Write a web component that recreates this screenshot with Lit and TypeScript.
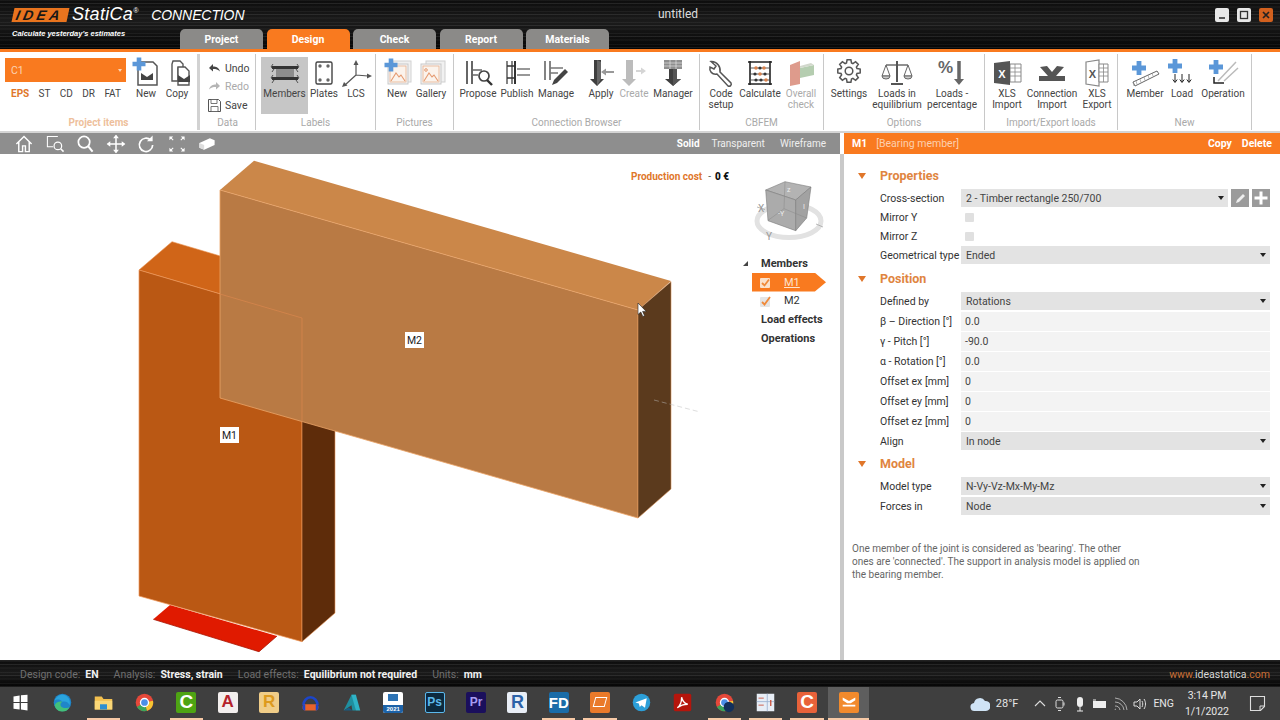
import { LitElement, html, css, svg } from 'lit';
import { customElement } from 'lit/decorators.js';

const BLUE = '#5b97d8';

const plus = (x: number, y: number, s = 6, t = 2.2) => svg`<path d="M${x - t} ${y - s}h${t * 2}v${s - t}h${s - t}v${t * 2}h${t - s}v${s - t}h${-t * 2}v${t - s}h${t - s}v${-t * 2}h${s - t}z" fill="${BLUE}"/>`;
const chev = (x: number, y: number, c = '#444') => svg`<path d="M${x} ${y}l6 4 6-4v7h-12z" fill="${c}"/>`;
const pic = (x: number, y: number) => svg`
  <rect x="${x}" y="${y}" width="20" height="20" fill="#f4f4f4" stroke="#c9c9c9"/>
  <rect x="${x + 2}" y="${y + 2}" width="16" height="16" fill="#fbf3ec" stroke="#e9b18f" stroke-width=".8"/>
  <path d="M${x + 3} ${y + 17}l5-8 3 4 2-2 4 6" fill="none" stroke="#e59a70" stroke-width="1.1"/>`;

const gear = () => {
  let d = '';
  const n = 8;
  for (let i = 0; i < n; i++) {
    const a = (i / n) * Math.PI * 2;
    const pts = [[-0.3, 8.4], [-0.17, 11.4], [0.17, 11.4], [0.3, 8.4]];
    pts.forEach(([da, r]) => {
      const x = 17 + Math.cos(a + da) * r;
      const y = 13 + Math.sin(a + da) * r;
      d += `${d ? 'L' : 'M'}${x.toFixed(1)} ${y.toFixed(1)}`;
    });
  }
  return svg`<path d="${d}z" fill="none" stroke="#555" stroke-width="1.5"/><circle cx="17" cy="13" r="3.8" fill="none" stroke="#555" stroke-width="1.5"/>`;
};

const arrowDown = (x: number, y: number, c = '#222') => svg`<path d="M${x} ${y}v8M${x - 2.2} ${y + 5.5}l2.2 3 2.2-3" fill="none" stroke="${c}" stroke-width="1"/>`;

const icons: Record<string, unknown> = {
  new: svg`<path d="M9 4h15l4 4v19H9z" fill="#fff" stroke="#555" stroke-width="1.5"/>${chev(12, 15)}${plus(10, 6, 6.5, 2.3)}`,
  copy: svg`<path d="M13 3h7l3 3v4h-5v13h-6V6z" fill="#fff" stroke="#555" stroke-width="1.4"/><path d="M18 9h7l4 4v14H18z" fill="#fff" stroke="#555" stroke-width="1.4"/>${chev(18, 17)}`,
  members: svg`<path d="M8 10h18v10H8z" fill="#8d8d8d"/><path d="M4 8h26v3H4zM4 19h26v3H4z" fill="#333"/><path d="M5 6l-2 3 3 2-2 3M29 6l2 3-3 2 2 3M5 17l-2 3 3 2-2 3M29 17l2 3-3 2 2 3" fill="none" stroke="#333" stroke-width=".8"/>`,
  plates: svg`<rect x="9" y="4" width="16" height="22" rx="1.5" fill="#fff" stroke="#444" stroke-width="1.4"/><g fill="#666"><circle cx="13" cy="8" r="1.7"/><circle cx="21" cy="8" r="1.7"/><circle cx="13" cy="22" r="1.7"/><circle cx="21" cy="22" r="1.7"/></g>`,
  lcs: svg`<path d="M17 17V5M17 17l12 1M17 17L6 27" stroke="#555" stroke-width="1.2" fill="none"/><path d="M17 2l-2.5 5h5zM33 18l-5-2.5v5zM3 29l5.5-1.5-3.5-3.5z" fill="#555"/>`,
  picnew: svg`<rect x="13" y="3" width="18" height="21" fill="#f1f1f1" stroke="#d2d2d2"/>${pic(8, 6)}${plus(11, 7, 6.5, 2.3)}`,
  gallery: svg`<rect x="12" y="3" width="19" height="21" fill="#f1f1f1" stroke="#cfcfcf"/>${pic(7, 6)}<circle cx="12" cy="12" r="1.3" fill="none" stroke="#e59a70"/>`,
  propose: svg`<path d="M6 3v23M11 3v23" stroke="#666" stroke-width="2"/><path d="M11 12h10M11 17h6" stroke="#666" stroke-width="1.5"/><circle cx="23" cy="18" r="5" fill="#fff" stroke="#444" stroke-width="1.7"/><path d="M26 22l5 5" stroke="#333" stroke-width="2.4"/>`,
  publish: svg`<path d="M7 3v23M12 3v23" stroke="#666" stroke-width="1.6"/><path d="M15 3v23" stroke="#333" stroke-width="2"/><path d="M7 8h8M7 20h8" stroke="#333" stroke-width="1.4"/><path d="M17 11h13M17 17h13" stroke="#777" stroke-width="1.7"/>`,
  manage: svg`<path d="M6 3v19M11 3v19" stroke="#777" stroke-width="1.8"/><path d="M11 10h13M11 15h8" stroke="#777" stroke-width="1.6"/><path d="M13 27l2-5 11-11 3 3-11 11z" fill="#444"/>`,
  apply: svg`<path d="M10 2h7v19h3l-7 7-7-7h4z" fill="#3f3f3f"/><path d="M17 4v17l-4 7V2z" fill="#666"/><path d="M17 14l5-3.500v2.500h8v2h-8v2.500z" fill="#999"/>`,
  create: svg`<path d="M9 2h7v19h3l-7 7-7-7h4z" fill="#bcbcbc"/><path d="M19 12h5v-2.500l5 3.500-5 3.500v-2.500h-5z" fill="#d5d5d5"/>`,
  manager: svg`<path d="M8 2h18v9H8z" fill="#8f8f8f"/><path d="M8 5h18M8 8h18M14 2v9M20 2v9" stroke="#eee" stroke-width=".6"/><path d="M13 11h8v10h4l-8 7-8-7h4z" fill="#3f3f3f"/><path d="M17 11h4v10h4l-8 7z" fill="#555"/>`,
  wrench: svg`<path d="M7 3.500l5 4.500-2 3-4-2c-1 4 2 8 7 7l11 12c2 1 4-1 3-3L16 14c1-5-3-11-9-10.500z" fill="#fff" stroke="#555" stroke-width="1.5"/>`,
  abacus: svg`<path d="M7 3v24M27 3v24M5 4h24M5 26h24" stroke="#222" stroke-width="1.6"/><path d="M7 10h20M7 16h20M7 22h20" stroke="#444" stroke-width=".9"/><g fill="#d9824d"><circle cx="13" cy="10" r="1.8"/><circle cx="21" cy="10" r="1.8"/><circle cx="17" cy="16" r="1.8"/><circle cx="23" cy="22" r="1.8"/></g><g fill="#333"><circle cx="17" cy="10" r="1.6"/><circle cx="12" cy="16" r="1.6"/><circle cx="22" cy="16" r="1.6"/><circle cx="13" cy="22" r="1.6"/><circle cx="18" cy="22" r="1.6"/></g>`,
  overall: svg`<path d="M6 7l10-4v23l-10 2z" fill="#de9b8c"/><path d="M16 10l14-3v10l-14 3z" fill="#b5cdb0"/><path d="M16 10l14-3-3-2-11 3z" fill="#d2d8cc"/>`,
  settings: gear(),
  scale: svg`<path d="M17 3v21" stroke="#555" stroke-width="2"/><path d="M11 25h12v2H11z" fill="#555"/><path d="M6 7h22" stroke="#555" stroke-width="1.3"/><path d="M6 7l-4 11h8zM28 7l-4 11h8z" fill="none" stroke="#666"/><path d="M2 18a4 3 0 0 0 8 0zM24 18a4 3 0 0 0 8 0z" fill="#ccc" stroke="#666"/>`,
  percent: svg`<text class="pct" x="3" y="15">%</text><path d="M24 3v19" stroke="#666" stroke-width="3.500"/><path d="M19 21h10l-5 6z" fill="#666"/>`,
  xlsin: svg`<path d="M20 6h11v18H20z" fill="#fff" stroke="#888"/><path d="M20 10h11M20 14h11M20 18h11M25 6v18" stroke="#888" stroke-width=".8"/><path d="M4 5l16-2v24l-16-2z" fill="#555"/><text class="xl" x="12" y="20" text-anchor="middle">X</text>`,
  conn: svg`<path d="M5 9l7-1 5 6 5-6 7 1-8 9h9v5H4v-5h9z" fill="#555"/>`,
  xlsout: svg`<path d="M6 4l13-2v26l-13-2z" fill="#fff" stroke="#888" stroke-width="1.2"/><path d="M19 6h9v18h-9z" fill="#fff" stroke="#888"/><path d="M19 10h9M19 14h9M19 18h9M23.500 6v18" stroke="#888" stroke-width=".8"/><text class="xl dark" x="12.500" y="20" text-anchor="middle">X</text>`,
  member: svg`<path d="M5 24l24-11 2 3-24 12z" fill="#fff" stroke="#666" stroke-width="1"/><path d="M5 24l1 4M8 22.500l1 4M12 21l1 3.500M16 19l1 3.500M20 17l1 3.500M24 15l1 3" stroke="#888" stroke-width=".6"/>${plus(11, 10, 7, 2.4)}`,
  load: svg`${plus(10, 8, 7, 2.4)}${arrowDown(10, 16)}${arrowDown(17, 16)}${arrowDown(24, 16)}`,
  operation: svg`<path d="M12 23L30 4M18 23L32 10" stroke="#bbb" stroke-width="1.5"/><path d="M8 19v6h10" fill="none" stroke="#222" stroke-width="1.5"/>${plus(10, 9, 7, 2.4)}`,
};

type Item = { l: string; i: string; w: number; off?: boolean; on?: boolean; ml?: number };
type Group = { label: string; w: number; pl: number; items: Item[] };

const groups: Group[] = [
  { label: 'Labels', w: 120, pl: 5, items: [
    { l: 'Members', i: 'members', w: 47, on: true },
    { l: 'Plates', i: 'plates', w: 32 },
    { l: 'LCS', i: 'lcs', w: 32 },
  ] },
  { label: 'Pictures', w: 78, pl: 4, items: [
    { l: 'New', i: 'picnew', w: 34 },
    { l: 'Gallery', i: 'gallery', w: 34 },
  ] },
  { label: 'Connection Browser', w: 246, pl: 4, items: [
    { l: 'Propose', i: 'propose', w: 40 },
    { l: 'Publish', i: 'publish', w: 38 },
    { l: 'Manage', i: 'manage', w: 40 },
    { l: 'Apply', i: 'apply', w: 34, ml: 8 },
    { l: 'Create', i: 'create', w: 32, off: true },
    { l: 'Manager', i: 'manager', w: 46 },
  ] },
  { label: 'CBFEM', w: 124, pl: 4, items: [
    { l: 'Code\nsetup', i: 'wrench', w: 34 },
    { l: 'Calculate', i: 'abacus', w: 44 },
    { l: 'Overall\ncheck', i: 'overall', w: 38, off: true },
  ] },
  { label: 'Options', w: 161, pl: 4, items: [
    { l: 'Settings', i: 'settings', w: 42 },
    { l: 'Loads in\nequilibrium', i: 'scale', w: 54 },
    { l: 'Loads -\npercentage', i: 'percent', w: 56 },
  ] },
  { label: 'Import/Export loads', w: 133, pl: 4, items: [
    { l: 'XLS\nImport', i: 'xlsin', w: 36 },
    { l: 'Connection\nImport', i: 'conn', w: 54 },
    { l: 'XLS\nExport', i: 'xlsout', w: 36 },
  ] },
  { label: 'New', w: 134, pl: 6, items: [
    { l: 'Member', i: 'member', w: 42 },
    { l: 'Load', i: 'load', w: 32 },
    { l: 'Operation', i: 'operation', w: 50 },
  ] },
];

const tools = [
  svg`<path d="M2 10l8-8 8 8M4.500 8V18h4v-6h3v6h4V8" fill="none" stroke="#fff" stroke-width="1.500"/>`,
  svg`<path d="M13 2H2v11h6" fill="none" stroke="#fff" stroke-width="1.1"/><circle cx="13" cy="12" r="4" fill="none" stroke="#fff" stroke-width="1.3"/><path d="M16 15l3 3" stroke="#fff" stroke-width="1.6"/>`,
  svg`<circle cx="9" cy="8" r="6" fill="none" stroke="#fff" stroke-width="1.800"/><path d="M13 12l5 6" stroke="#fff" stroke-width="2.200"/>`,
  svg`<path d="M10 2v16M2 10h16" stroke="#fff" stroke-width="1.6"/><path d="M10 0l3 4H7zM10 20l3-4H7zM0 10l4-3v6zM20 10l-4-3v6z" fill="#fff"/>`,
  svg`<path d="M15 6a7 7 0 1 0 2 5" fill="none" stroke="#fff" stroke-width="1.8"/><path d="M17 1v6h-6z" fill="#fff"/>`,
  svg`<g fill="none" stroke="#fff" stroke-width="1.100"><path d="M6 6L3 3M14 6l3-3M6 14l-3 3M14 14l3 3"/></g><path d="M2 2h4L2 6zM18 2v4l-4-4zM2 18v-4l4 4zM18 18h-4l4-4z" fill="#fff"/>`,
  svg`<path d="M2 9l11-5 5 2v5L7 16l-5-2z" fill="#fff"/><path d="M2 9l5 2v5l-5-2z" fill="#ddd"/>`,
];

const appIco = (body: unknown) => html`<svg class="app-ico" viewBox="0 0 24 24">${body}</svg>`;
const badge = (cls: string, t: string) => html`<span class="badge ${cls}">${t}</span>`;
const chrome = svg`<circle cx="12" cy="12" r="10" fill="#e5483a"/><path d="M12 12L3.300 17A10 10 0 0 0 15 21.500z" fill="#3ba55c"/><path d="M12 12l3 9.500A10 10 0 0 0 21.800 10z" fill="#f6c531"/><circle cx="12" cy="12" r="4.600" fill="#4a8fe7" stroke="#fff" stroke-width="1.500"/>`;

const apps: { b: unknown; run?: boolean; active?: boolean }[] = [
  { b: appIco(svg`<path d="M4 5l7-1v7.500H4zM12.500 3.800L20 3v8.500h-7.500zM4 12.500h7V20l-7-1zM12.500 12.500H20V21l-7.500-1z" fill="#fff"/>`) },
  { b: appIco(svg`<circle cx="12" cy="12" r="10" fill="#1f86c9"/><path d="M3 15a9 9 0 0 0 17 2c-3 2-8 2-10-1-1-2 0-4 2-5-4-1-8 1-9 4z" fill="#43c07a"/><path d="M12 11c4-1 7 1 8 4 2-5-2-12-8-12-4 0-8 3-9 7 2-2 6-2 9 1z" fill="#2aa4dd"/>`) },
  { b: appIco(svg`<path d="M2 5h8l2 3h10v12H2z" fill="#f3c04f"/><path d="M2 10h20v10H2z" fill="#fad777"/><path d="M8 14h8v6H8z" fill="#2f8fd0"/>`), run: true },
  { b: appIco(chrome) },
  { b: badge('c-green', 'C'), run: true },
  { b: badge('acad', 'A') },
  { b: badge('rev', 'R') },
  { b: appIco(svg`<path d="M4 15a8 9 0 0 1 16 0" fill="none" stroke="#1c45c9" stroke-width="3"/><rect x="3" y="14" width="18" height="7" rx="3" fill="#e8622a"/><path d="M3 17a3 3 0 0 1 3-3v7a3 3 0 0 1-3-3zM21 17a3 3 0 0 0-3-3v7a3 3 0 0 0 3-3z" fill="#1c45c9"/>`) },
  { b: appIco(svg`<path d="M3 21L12 3h5v18h-4l-1-6z" fill="#1f8f9f"/><path d="M12 3h5l5 18h-5z" fill="#2fb3c7"/><path d="M3 21l6-3 4 3z" fill="#175e88"/>`) },
  { b: html`<span class="badge d2021"><i></i><b>2021</b></span>` },
  { b: badge('ps', 'Ps') },
  { b: badge('pr', 'Pr') },
  { b: badge('rvt', 'R') },
  { b: badge('fd', 'FD'), run: true },
  { b: html`<span class="badge idea-app"><i></i></span>`, run: true },
  { b: appIco(svg`<circle cx="12" cy="12" r="10" fill="#2c9fd9"/><path d="M5 12l13-5-2 11-4-3-2 2-1-4z" fill="#fff"/>`) },
  { b: appIco(svg`<rect x="2" y="2" width="20" height="20" rx="2" fill="#b5150c"/><path d="M6 18c3-2 5-7 5-12 1 5 3 7 7 8-4 0-8 1-12 4z" fill="none" stroke="#fff" stroke-width="1.500"/>`) },
  { b: appIco(svg`${chrome}<circle cx="17" cy="17" r="6" fill="#12305c"/>`), run: true },
  { b: appIco(svg`<rect x="2" y="2" width="20" height="20" fill="#e8eef6"/><path d="M14 2v20M2 11h20" stroke="#9db4d2"/><path d="M4 7h6M4 15h6" stroke="#c9503a"/><path d="M18 9v7" stroke="#c9503a" stroke-width="1.500"/>`), run: true },
  { b: badge('c-orange', 'C'), run: true },
  { b: html`<span class="badge conn-app"><svg viewBox="0 0 20 20"><path d="M3 5l7 4 7-4v3l-5 3.500H8L3 8zM3 13h14v2H3z" fill="#fff"/></svg></span>`, run: true, active: true },
];

@customElement('app-root')
export class AppRoot extends LitElement {
  static styles = css`
    :host {
      display: block;
      width: 1280px;
      height: 720px;
      overflow: hidden;
      font-family: Roboto, "Open Sans", sans-serif;
      font-size: 10.5px;
      background: #fff;
      color: #333;
    }
    .streak {
      background:
        repeating-linear-gradient(180deg, rgba(255,255,255,.05) 0 1px, transparent 1px 3px, rgba(255,255,255,.09) 3px 4px, transparent 4px 6px, rgba(255,255,255,.03) 6px 8px, transparent 8px 11px),
        linear-gradient(180deg, #0d0d0d, #1b1b1b 45%, #050505);
    }

    /* title bar */
    .title {
      height: 52px;
      box-sizing: border-box;
      display: flex;
      border-bottom: 3px solid #f97a1f;
    }
    .brand {
      width: 180px;
      box-sizing: border-box;
      flex: none;
      padding: 6px 0 0 13px;
      font-family: "Liberation Sans", sans-serif;
      font-style: italic;
      color: #fff;
    }
    .logo-line { display: flex; align-items: center; height: 17px; white-space: nowrap; }
    .idea {
      background: #e9741e;
      color: #171717;
      font-weight: 700;
      font-size: 14px;
      line-height: 14px;
      padding-left: 3px;
      width: 55px;
      letter-spacing: 3.4px;
      box-sizing: border-box;
      transform: skewX(-12deg);
      flex: none;
    }
    .stat { font-size: 18px; margin-left: 4px; letter-spacing: .3px; }
    .reg { font-size: 7px; align-self: flex-start; margin-top: 1px; }
    .prod { font-size: 14px; margin-left: 13px; letter-spacing: -.1px; }
    .slogan { font-size: 7.500px; font-weight: 700; margin-top: 6px; margin-left: -1px; white-space: nowrap; }
    .tabs { display: flex; align-items: flex-end; gap: 3.500px; }
    .tab {
      width: 83px;
      height: 20px;
      background: #8b8a88;
      border-radius: 5px 5px 0 0;
      color: #fff;
      font-weight: 700;
      font-size: 10.500px;
      display: flex;
      align-items: center;
      justify-content: center;
    }
    .tab.on { background: #f97a1f; }
    .doc {
      flex: 1;
      text-align: center;
      color: #ddd;
      font-size: 12px;
      padding-top: 7px;
      padding-right: 468px;
    }
    .win { display: flex; gap: 8px; padding: 8px 7px 0 0; }
    .win span {
      width: 14px;
      height: 14px;
      border-radius: 2px;
      background: #e8e8e8;
      display: flex;
      align-items: center;
      justify-content: center;
    }
    .win span.x { background: #d2601e; }
    .win svg { width: 14px; height: 14px; }

    /* ribbon */
    .ribbon {
      height: 81px;
      box-sizing: border-box;
      border-bottom: 2px solid #d4d4d4;
      padding-top: 2px;
      display: flex;
      background: #fff;
    }
    .grp {
      height: 76px;
      box-sizing: border-box;
      border-right: 1px solid #c8c8c8;
      display: flex;
      flex-direction: column;
      flex: none;
      padding-top: 3px;
    }
    .grp.first { border-right: 3px solid #d2d2d2; width: 200px; }
    .grp.data { width: 56px; }
    .grp-body { display: flex; height: 57px; flex: none; }
    .grp-label {
      text-align: center;
      color: #a9a9a9;
      font-size: 10px;
      line-height: 14px;
      margin-top: 2px;
    }
    .first .grp-label { color: #eebf9c; font-weight: 700; }
    .btn {
      display: flex;
      flex-direction: column;
      align-items: center;
      flex: none;
      height: 57px;
      color: #444;
      font-size: 10px;
      line-height: 11px;
      text-align: center;
    }
    .btn.on { background: #c6c6c6; }
    .btn.off { color: #aaa; }
    .btn svg { width: 34px; height: 30px; margin-top: 1px; overflow: visible; flex: none; }
    .btn span { white-space: pre; }
    .pct { font: 700 17px "Liberation Sans", sans-serif; fill: #666; }
    .xl { font: 700 11px "Liberation Sans", sans-serif; fill: #fff; }
    .xl.dark { fill: #555; }
    .items { width: 121px; margin: 1px 2px 0 5px; flex: none; }
    .combo {
      height: 24px;
      background: #f97a1f;
      color: #fbd3b4;
      display: flex;
      align-items: center;
      justify-content: space-between;
      padding: 0 4px 0 6px;
      font-size: 10.500px;
    }
    .tri { width: 0; height: 0; border-left: 2px solid transparent; border-right: 2px solid transparent; border-top: 3px solid #fbd3b4; }
    .codes { display: flex; justify-content: space-between; padding: 5px 5px 0 6px; font-size: 10px; color: #444; line-height: 14px; }
    .codes b { color: #e0762a; }
    .stack { padding: 2px 0 0 8px; }
    .mini { display: flex; align-items: center; gap: 4px; height: 18.500px; font-size: 10.500px; color: #444; }
    .mini.off { color: #aaa; }
    .mini svg { width: 13px; height: 13px; flex: none; }

    /* work area */
    .work { display: grid; grid-template-columns: 840px 4px 436px; grid-template-rows: 21px 506px; }
    .bar {
      background: #8e8e8e;
      display: flex;
      align-items: center;
      padding-left: 14px;
      color: #eee;
      font-size: 10px;
    }
    .bar svg { width: 20px; height: 20px; margin-right: 10.500px; flex: none; transform: scale(.95); }
    .modes { margin-left: auto; display: flex; gap: 15px; padding-right: 14px; }
    .modes b { color: #fff; margin-right: -3px; }
    .gap { background: #fff; }
    .divider { background: #c9c9c9; }
    .head {
      background: #f97a1f;
      color: #fff;
      display: flex;
      align-items: center;
      padding: 0 8px 0 8px;
      font-weight: 700;
    }
    .head em { font-style: normal; font-weight: 400; color: #fcd0ae; margin-left: 9px; }
    .head .act { margin-left: auto; display: flex; gap: 10px; }
    .view { position: relative; background: #fff; overflow: hidden; }
    .scene { position: absolute; inset: 0; width: 840px; height: 506px; }
    .mlabel { font: 10.500px Roboto, sans-serif; fill: #222; }
    .cost { position: absolute; left: 631px; top: 17px; font-size: 10px; font-weight: 700; color: #e0762a; white-space: nowrap; }
    .cost i { font-style: normal; font-weight: 400; color: #555; margin: 0 4px 0 6px; }
    .cost b { color: #111; }
    .cube { position: absolute; left: 750px; top: 22px; width: 80px; height: 70px; }
    .cube text { font: 7px Roboto, sans-serif; fill: #eee; }
    .cube text.ax { fill: #999; font-size: 10px; }
    .tree { position: absolute; left: 742px; top: 100px; width: 86px; font-size: 11px; }
    .t-row { height: 18.800px; display: flex; align-items: center; padding-left: 19px; font-weight: 700; color: #333; white-space: nowrap; position: relative; }
    .t-row .open { position: absolute; left: 1px; top: 7px; width: 0; height: 0; border-left: 5px solid transparent; border-bottom: 5px solid #444; }
    .t-row.leaf { font-weight: 400; padding-left: 42px; }
    .t-row.leaf svg { position: absolute; left: 17px; top: 3px; width: 13px; height: 13px; }
    .t-row.sel { background: #f97a1f; color: #fde3cf; text-decoration: underline; margin-left: 10px; padding-left: 32px; clip-path: polygon(0 0, 85% 0, 100% 50%, 85% 100%, 0 100%); width: 74px; box-sizing: border-box; }
    .t-row.sel svg { left: 7px; }

    /* properties */
    .panel { background: #fff; padding: 12px 10px 0 14px; color: #333; }
    .sec-h { display: flex; align-items: center; height: 19px; color: #e0853f; font-weight: 700; font-size: 12.500px; gap: 14px; }
    .sec-h i { width: 0; height: 0; border-left: 4px solid transparent; border-right: 4px solid transparent; border-top: 6px solid #e0762a; }
    .rows { display: flex; flex-direction: column; gap: 1px; margin: 4px 0 3px; }
    .rows.tight { gap: 0; margin: 4px 0 4px; }
    .rows.last { margin-top: 4px; }
    .row { display: grid; grid-template-columns: 81px 1fr; padding-left: 22px; height: 19px; align-items: stretch; }
    .row label { display: flex; align-items: center; white-space: nowrap; }
    .sel-box { background: #e3e3e3; display: flex; align-items: center; justify-content: space-between; padding: 0 4px 0 5px; color: #444; margin-bottom: 1px; }
    .sel-box i { width: 0; height: 0; border-left: 3px solid transparent; border-right: 3px solid transparent; border-top: 4px solid #222; }
    .inp { background: #f3f3f3; display: flex; align-items: center; padding-left: 4px; color: #444; }
    .chk { display: flex; align-items: center; padding-left: 4px; }
    .chk i { width: 9px; height: 9px; background: #e0e0e0; border-radius: 1px; }
    .cs { display: flex; gap: 3px; }
    .cs .sel-box { flex: 1; }
    .sq { width: 18px; background: #9b9b9b; margin-bottom: 1px; flex: none; display: flex; }
    .sq svg { width: 18px; height: 18px; }
    .note { margin: 26px 0 0 -6px; line-height: 13px; color: #666; font-size: 10px; }

    /* status and taskbar */
    .status {
      height: 27px;
      display: flex;
      align-items: center;
      padding: 0 10px 0 20px;
      box-sizing: border-box;
      color: #6f6f6f;
      white-space: nowrap;
      border-top: 1px solid #222;
    }
    .status b { color: #f2f2f2; margin: 0 15px 0 5px; }
    .web { margin-left: auto; color: #c96f35; }
    .web span { color: #d8d8d8; }
    .task { height: 33px; background: #3f3f3f; display: flex; align-items: stretch; color: #e6e6e6; }
    .app { width: 41.400px; flex: none; display: flex; align-items: center; justify-content: center; position: relative; box-sizing: border-box; padding-bottom: 3px; }
    .app.run::after { content: ''; position: absolute; left: 4px; right: 4px; bottom: 0; height: 2px; background: #f7c9a6; }
    .app.active { background: #5e5e5e; }
    .app.active::after { left: 0; right: 0; }
    .app-ico { width: 21px; height: 21px; }
    .badge {
      width: 20px;
      height: 21px;
      display: flex;
      align-items: center;
      justify-content: center;
      font: 700 13px "Liberation Sans", sans-serif;
      border-radius: 2px;
    }
    .c-green { background: #4ea413; color: #fff; font-size: 19px; }
    .c-orange { background: #e8623a; color: #fff; font-size: 19px; }
    .acad { background: #f3efee; color: #b5232c; font-size: 17px; }
    .rev { background: #f0cd88; color: #dd9a1e; font-size: 17px; }
    .d2021 { background: #fff; flex-direction: column; justify-content: space-between; overflow: hidden; }
    .d2021 i { width: 10px; height: 7px; background: #2e74b5; margin-top: 2px; }
    .d2021 b { background: #1d63a8; color: #fff; width: 100%; text-align: center; font-size: 6px; line-height: 8px; }
    .ps { background: #0d2a3f; color: #5bb8ec; border: 1px solid #5bb8ec; box-sizing: border-box; font-size: 12px; }
    .pr { background: #1a0f5c; color: #a79cf2; font-size: 12px; }
    .rvt { background: #e9eef6; color: #2c62a8; font-size: 18px; }
    .fd { background: #1a6ca8; color: #fff; font-size: 15px; }
    .idea-app { background: #ea7a2a; }
    .idea-app i { width: 10px; height: 8px; border: 1.500px solid #fff; transform: skewX(-15deg); }
    .conn-app { background: #f28a2c; }
    .conn-app svg { width: 18px; height: 18px; }
    .tray { margin-left: auto; display: flex; align-items: center; font-size: 11px; }
    .tray svg { flex: none; }
    .temp { margin: 0 14px 0 6px; }
    .ico16 { width: 16px; height: 16px; margin-right: 4px; }
    .cloud { width: 20px; height: 16px; }
    .eng { font-size: 10.500px; margin: 0 9px 0 1px; }
    .clock { text-align: center; line-height: 16px; font-size: 10.500px; width: 48px; }
    .notif { width: 17px; height: 17px; margin: 0 14px 0 18px; }
  `;

  private ribbonGroup(g: Group) {
    return html`
      <div class="grp" style="width:${g.w}px">
        <div class="grp-body" style="padding-left:${g.pl}px">
          ${g.items.map((it) => html`
            <div class="btn ${it.on ? 'on' : ''} ${it.off ? 'off' : ''}" style="width:${it.w}px;margin-left:${it.ml ?? 0}px">
              <svg viewBox="0 0 34 30">${icons[it.i]}</svg>
              <span>${it.l}</span>
            </div>`)}
        </div>
        <div class="grp-label">${g.label}</div>
      </div>`;
  }

  private viewport() {
    return html`
      <svg class="scene" viewBox="0 154 840 506">
        <path d="M153.300 619.300L170 605l107 31-18 15.700z" fill="#e01a00"/>
        <path d="M153.300 619.300L259 651.700l18-15.700" fill="none" stroke="#a81400" stroke-width=".8"/>
        <path d="M139 270l33-28.300L335 290l-33 28z" fill="#d06518" stroke="#e8914f" stroke-width=".6"/>
        <path d="M139 270l163 48v323.700L139 596z" fill="#ba5814" stroke="#ef9a5c" stroke-width=".7"/>
        <path d="M302 318l33-28v323l-33 28.700z" fill="#5e2c0a" stroke="#ef9a5c" stroke-width=".6"/>
        <path d="M220 190l34-29.300L671 281l-33 29z" fill="#cb8749"/>
        <path d="M220 190l418 120v208L220 398z" fill="#b97a44" stroke="#eba468" stroke-width=".8"/>
        <path d="M638 310l33-28.300V489l-33 29z" fill="#5b3a1d" stroke="#d79058" stroke-width=".6"/>
        <path d="M220 294l82 24v104" fill="none" stroke="#d5854c" stroke-width=".8"/>
        <path d="M654 400l46 12" stroke="#bdbdbd" stroke-width=".7" stroke-dasharray="5 3" opacity=".7"/>
        <rect x="220" y="427" width="19" height="16" fill="#fff"/>
        <text class="mlabel" x="229.500" y="439" text-anchor="middle">M1</text>
        <rect x="405" y="332" width="19" height="16" fill="#fff"/>
        <text class="mlabel" x="414.500" y="344" text-anchor="middle">M2</text>
        <path d="M638 303v11.500l2.800-2.500 2 4.500 1.800-.8-2-4.300h3.600z" fill="#fff" stroke="#222" stroke-width=".6"/>
      </svg>
      <div class="cost">Production cost<i>-</i><b>0 €</b></div>
      <svg class="cube" viewBox="750 176 80 70">
        <ellipse cx="789" cy="221" rx="32" ry="16.500" fill="none" stroke="#e2e2e2" stroke-width="5"/>
        <path d="M765.700 190L785 181.700 811 187 795.700 200z" fill="#b3b3b3" stroke="#7c7c7c" stroke-width=".6"/>
        <path d="M765.700 190l30 10v30.700l-27.700-10z" fill="#ababab" stroke="#7c7c7c" stroke-width=".6"/>
        <path d="M795.700 200L811 187l-4.300 31-11 12.700z" fill="#a2a2a2" stroke="#7c7c7c" stroke-width=".6"/>
        <path d="M785 181.700l-1 27-16 11.700M784 208.700l22.700 9.300" fill="none" stroke="#888" stroke-width=".5"/>
        <text x="787" y="192">z</text>
        <text x="778" y="216">-Y</text>
        <text x="803" y="209">I</text>
        <path d="M757 207l8 2.500M816 224l7 3" stroke="#999" stroke-width=".7"/>
        <text class="ax" x="758" y="212">X</text>
        <text class="ax" x="766" y="240">Y</text>
      </svg>
      <div class="tree">
        <div class="t-row"><i class="open"></i>Members</div>
        <div class="t-row leaf sel">
          <svg viewBox="0 0 13 13"><rect x="1" y="2" width="10" height="10" rx="1" fill="#fbe1cb"/><path d="M3 7l2.500 2.500L10 3.500" fill="none" stroke="#f08a3a" stroke-width="1.800"/></svg>
          M1
        </div>
        <div class="t-row leaf">
          <svg viewBox="0 0 13 13"><rect x="1" y="2" width="10" height="10" rx="1" fill="#e4e4e4"/><path d="M3 7l2.500 2.500L11 2" fill="none" stroke="#f08a3a" stroke-width="1.800"/></svg>
          M2
        </div>
        <div class="t-row">Load effects</div>
        <div class="t-row">Operations</div>
      </div>`;
  }

  private selectRow(l: string, v: string) {
    return html`<div class="row"><label>${l}</label><div class="sel-box">${v}<i></i></div></div>`;
  }

  private inputRow(l: string, v: string) {
    return html`<div class="row"><label>${l}</label><div class="inp">${v}</div></div>`;
  }

  private checkRow(l: string) {
    return html`<div class="row"><label>${l}</label><div class="chk"><i></i></div></div>`;
  }

  render() {
    return html`
      <div class="title streak">
        <div class="brand">
          <div class="logo-line">
            <span class="idea">IDEA</span><span class="stat">StatiCa</span><span class="reg">®</span>
            <span class="prod">CONNECTION</span>
          </div>
          <div class="slogan">Calculate yesterday's estimates</div>
        </div>
        <div class="tabs">
          ${['Project', 'Design', 'Check', 'Report', 'Materials'].map((t) => html`<div class="tab ${t === 'Design' ? 'on' : ''}">${t}</div>`)}
        </div>
        <div class="doc">untitled</div>
        <div class="win">
          <span><svg viewBox="0 0 14 14"><path d="M4 10h6" stroke="#333" stroke-width="1.600"/></svg></span>
          <span><svg viewBox="0 0 14 14"><rect x="3.500" y="3.500" width="7" height="7" fill="none" stroke="#333" stroke-width="1.300"/></svg></span>
          <span class="x"><svg viewBox="0 0 14 14"><path d="M4 4l6 6M10 4l-6 6" stroke="#222" stroke-width="1.700"/></svg></span>
        </div>
      </div>

      <div class="ribbon">
        <div class="grp first">
          <div class="grp-body">
            <div class="items">
              <div class="combo">C1<span class="tri"></span></div>
              <div class="codes"><b>EPS</b><span>ST</span><span>CD</span><span>DR</span><span>FAT</span></div>
            </div>
            <div class="btn" style="width:36px"><svg viewBox="0 0 34 30">${icons.new}</svg><span>New</span></div>
            <div class="btn" style="width:26px"><svg viewBox="0 0 34 30">${icons.copy}</svg><span>Copy</span></div>
          </div>
          <div class="grp-label">Project items</div>
        </div>
        <div class="grp data">
          <div class="grp-body">
            <div class="stack">
              <div class="mini"><svg viewBox="0 0 13 13"><path d="M1 6l4-4v2.500c3 0 6 1 7 5-2-2-4-2.500-7-2.500V9.500z" fill="#444"/></svg>Undo</div>
              <div class="mini off"><svg viewBox="0 0 13 13"><path d="M12 6L8 2v2.500c-3 0-6 1-7 5 2-2 4-2.500 7-2.500v2.500z" fill="#b5b5b5"/></svg>Redo</div>
              <div class="mini"><svg viewBox="0 0 13 13"><path d="M.5.5h10l2 2v10H.5z" fill="#fff" stroke="#555"/><path d="M3 .5h6v4H3zM3 7.500h7v5H3z" fill="#fff" stroke="#555" stroke-width=".8"/></svg>Save</div>
            </div>
          </div>
          <div class="grp-label">Data</div>
        </div>
        ${groups.map((g) => this.ribbonGroup(g))}
      </div>

      <div class="work">
        <div class="bar">
          ${tools.map((t) => html`<svg viewBox="0 0 20 20">${t}</svg>`)}
          <div class="modes"><b>Solid</b><span>Transparent</span><span>Wireframe</span></div>
        </div>
        <div class="gap"></div>
        <div class="head">M1<em>[Bearing member]</em><div class="act"><span>Copy</span><span>Delete</span></div></div>
        <div class="view">${this.viewport()}</div>
        <div class="divider"></div>
        <div class="panel">
          <div class="sec-h"><i></i>Properties</div>
          <div class="rows tight">
            <div class="row"><label>Cross-section</label>
              <div class="cs">
                <div class="sel-box">2 - Timber rectangle 250/700<i></i></div>
                <div class="sq"><svg viewBox="0 0 18 18"><path d="M5 14l1-3 6-6 2 2-6 6z" fill="#eee"/></svg></div>
                <div class="sq"><svg viewBox="0 0 18 18"><path d="M7.500 2.500h3v5h5v3h-5v5h-3v-5h-5v-3h5z" fill="#fff"/></svg></div>
              </div>
            </div>
            ${this.checkRow('Mirror Y')}
            ${this.checkRow('Mirror Z')}
            ${this.selectRow('Geometrical type', 'Ended')}
          </div>
          <div class="sec-h"><i></i>Position</div>
          <div class="rows">
            ${this.selectRow('Defined by', 'Rotations')}
            ${this.inputRow('β – Direction [°]', '0.0')}
            ${this.inputRow('γ - Pitch [°]', '-90.0')}
            ${this.inputRow('α - Rotation [°]', '0.0')}
            ${this.inputRow('Offset ex [mm]', '0')}
            ${this.inputRow('Offset ey [mm]', '0')}
            ${this.inputRow('Offset ez [mm]', '0')}
            ${this.selectRow('Align', 'In node')}
          </div>
          <div class="sec-h"><i></i>Model</div>
          <div class="rows last">
            ${this.selectRow('Model type', 'N-Vy-Vz-Mx-My-Mz')}
            ${this.selectRow('Forces in', 'Node')}
          </div>
          <div class="note">One member of the joint is considered as 'bearing'. The other<br>ones are 'connected'. The support in analysis model is applied on<br>the bearing member.</div>
        </div>
      </div>

      <div class="status streak">
        Design code:<b>EN</b>Analysis:<b>Stress, strain</b>Load effects:<b>Equilibrium not required</b>Units:<b>mm</b>
        <div class="web">www.<span>ideastatica</span>.com</div>
      </div>

      <div class="task">
        ${apps.map((a) => html`<div class="app ${a.run ? 'run' : ''} ${a.active ? 'active' : ''}">${a.b}</div>`)}
        <div class="tray">
          <svg class="cloud" viewBox="0 0 20 16"><path d="M5 15a4 4 0 0 1-1-8 6 6 0 0 1 11-2 5 5 0 0 1 1 10z" fill="#cfe3f5"/></svg>
          <span class="temp">28°F</span>
          <svg class="ico16" viewBox="0 0 16 16"><path d="M3 10l5-5 5 5" fill="none" stroke="#ddd" stroke-width="1.100"/></svg>
          <svg class="ico16" viewBox="0 0 16 16"><rect x="4" y="4" width="7" height="8" rx="1.500" fill="none" stroke="#ddd"/><path d="M6 1.500h3M6 14.500h3M12 6.500v3" stroke="#ddd"/></svg>
          <svg class="ico16" viewBox="0 0 16 16"><rect x="5" y="1" width="6" height="10" rx="3" fill="#eee"/><path d="M8 11v4M5 15h6" stroke="#eee"/></svg>
          <svg class="ico16" viewBox="0 0 16 16"><rect x="1" y="5" width="13" height="7" fill="#eee"/><path d="M1 4h3" stroke="#eee"/></svg>
          <svg class="ico16" viewBox="0 0 16 16"><path d="M3 14a1 1 0 0 1 1-1M3 10a5 5 0 0 1 5 4M3 6a9 9 0 0 1 9 8M3 2a13 13 0 0 1 12 12" fill="none" stroke="#bbb" stroke-width=".9"/></svg>
          <svg class="ico16" viewBox="0 0 16 16"><path d="M2 6h3l3-3v10l-3-3H2zM10 5c1 2 1 4 0 6M12 3c2 3 2 7 0 10" fill="none" stroke="#ddd"/></svg>
          <span class="eng">ENG</span>
          <div class="clock">3:14 PM<br>1/1/2022</div>
          <svg class="notif" viewBox="0 0 17 17"><path d="M1.500 1.500h14v10l-4 4h-10z" fill="none" stroke="#ddd" stroke-width="1.100"/><path d="M11 15v-4h4" fill="none" stroke="#ddd"/></svg>
        </div>
      </div>
    `;
  }
}
